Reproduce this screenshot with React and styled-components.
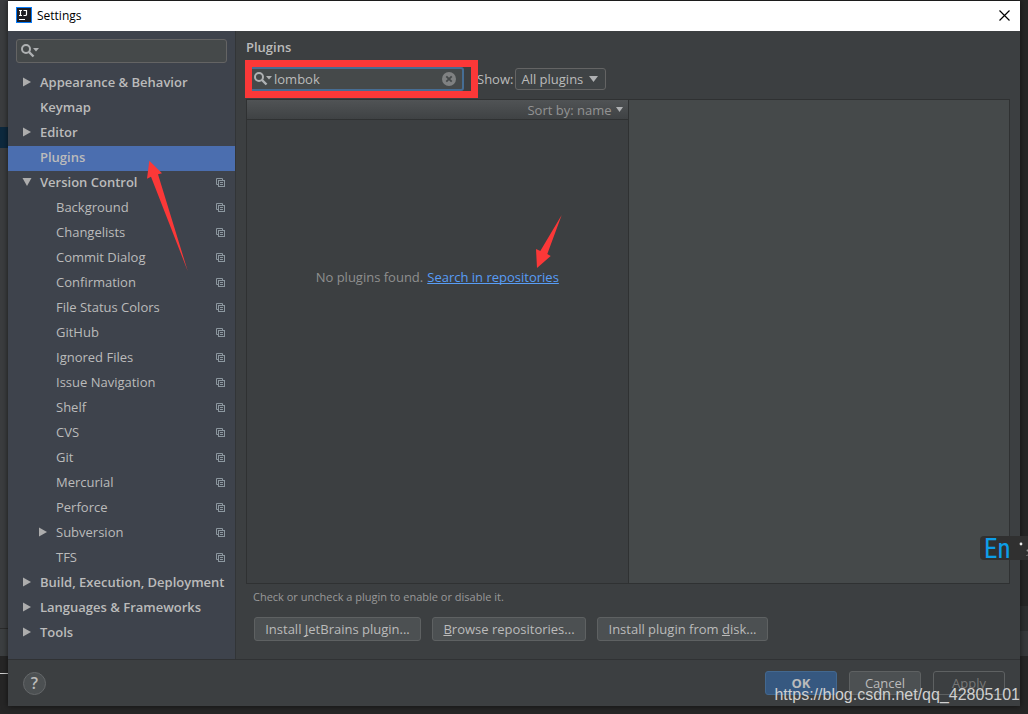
import React, { useState } from 'react';
import styled, { createGlobalStyle } from 'styled-components';

const GlobalStyle = createGlobalStyle`
  * {
    box-sizing: border-box;
  }

  body {
    margin: 0;
    background: #262626;
    color: #bbbbbb;
    font-family: 'Open Sans', 'Noto Sans', 'Noto Sans CJK SC', sans-serif;
    font-size: 13px;
    line-height: 18px;
  }

  button, input, select {
    font: inherit;
    color: inherit;
  }

  svg {
    flex-shrink: 0;
  }

  u, a {
    text-decoration-skip-ink: none;
  }
`;

const treeItems = [
  { label: 'Appearance & Behavior', top: true, arrow: 'right' },
  { label: 'Keymap', top: true },
  { label: 'Editor', top: true, arrow: 'right' },
  { label: 'Plugins', top: true, pointed: true },
  { label: 'Version Control', top: true, arrow: 'down', project: true },
  { label: 'Background', project: true },
  { label: 'Changelists', project: true },
  { label: 'Commit Dialog', project: true },
  { label: 'Confirmation', project: true },
  { label: 'File Status Colors', project: true },
  { label: 'GitHub', project: true },
  { label: 'Ignored Files', project: true },
  { label: 'Issue Navigation', project: true },
  { label: 'Shelf', project: true },
  { label: 'CVS', project: true },
  { label: 'Git', project: true },
  { label: 'Mercurial', project: true },
  { label: 'Perforce', project: true },
  { label: 'Subversion', arrow: 'right', project: true },
  { label: 'TFS', project: true },
  { label: 'Build, Execution, Deployment', top: true, arrow: 'right' },
  { label: 'Languages & Frameworks', top: true, arrow: 'right' },
  { label: 'Tools', top: true, arrow: 'right' },
];

const SearchIcon = () => (
  <svg width="18" height="14" viewBox="0 0 18 14" aria-hidden="true">
    <circle cx="5" cy="5" r="4" fill="none" stroke="#afb1b3" strokeWidth="2" />
    <path d="M8 8L12.5 12.5" stroke="#afb1b3" strokeWidth="2.4" />
    <path d="M12 4H18L15 7.5Z" fill="#afb1b3" />
  </svg>
);

const TreeArrow = ({ direction }) => (
  <svg width="10" height="10" viewBox="0 0 10 10" aria-hidden="true">
    {direction === 'right' && <path d="M1 0.5L9 5L1 9.5Z" fill="#adadad" />}
    {direction === 'down' && <path d="M0.5 1H9.5L5 9Z" fill="#adadad" />}
  </svg>
);

const ProjectIcon = () => (
  <svg width="9" height="9" viewBox="0 0 9 9" fill="none" stroke="#8c979f" aria-hidden="true">
    <path d="M2 6.5H0.5V0.5H6.5V2" />
    <rect x="2.5" y="2.5" width="6" height="6" />
    <path d="M4 4.5H7M4 6.5H7" />
  </svg>
);

const Caret = () => (
  <svg width="9" height="6" viewBox="0 0 9 6" aria-hidden="true">
    <path d="M0 0H9L4.5 6Z" fill="#afb1b3" />
  </svg>
);

const AppLogo = () => (
  <svg width="16" height="16" viewBox="0 0 16 16" aria-hidden="true">
    <rect width="16" height="16" fill="#087cfa" />
    <rect x="1" y="1" width="14" height="14" fill="#1c1c22" />
    <path d="M3 3.5H6M4.5 3.5V8.5M3 8.5H6M7.5 3.5H10.5V7.5Q10.5 8.5 9.4 8.5H7.5" fill="none" stroke="#fff" strokeWidth="1.2" />
    <path d="M3 12.5H9" stroke="#fff" />
  </svg>
);

const App = () => {
  const [selected, setSelected] = useState('Plugins');
  const [treeQuery, setTreeQuery] = useState('');
  const [query, setQuery] = useState('lombok');

  return (
    <Desktop>
      <GlobalStyle />
      <LeftEdge>
        <EdgePart $grow={127} $color="#3b3d3f" />
        <EdgePart $grow={21} $color="#0d293e" />
        <EdgePart $grow={482} $color="#3b3d3f" />
        <EdgePart $grow={27} $color="#3c3f41" $line="#2b2b2b" />
        <EdgePart $grow={17} $color="#262626" />
        <EdgePart $grow={40} $color="#262626" $line="#d0d0d0" />
      </LeftEdge>

      <Dialog>
        <TitleBar>
          <AppLogo />
          <WindowTitle>Settings</WindowTitle>
          <CloseButton aria-label="Close">
            <svg width="11" height="11" viewBox="0 0 11 11">
              <path d="M0.5 0.5L10.5 10.5M10.5 0.5L0.5 10.5" stroke="#000" strokeWidth="1.2" />
            </svg>
          </CloseButton>
        </TitleBar>

        <Body>
          <Sidebar>
            <SearchBox>
              <SearchIcon />
              <TextInput
                aria-label="Search settings"
                value={treeQuery}
                onChange={(e) => setTreeQuery(e.target.value)}
              />
            </SearchBox>
            <Tree>
              {treeItems.map((item) => (
                <TreeItem key={item.label}>
                  <TreeButton
                    $top={item.top}
                    $selected={selected === item.label}
                    onClick={() => setSelected(item.label)}
                  >
                    <TreeArrow direction={item.arrow} />
                    <TreeLabel>{item.label}</TreeLabel>
                    {item.project && <ProjectIcon />}
                  </TreeButton>
                  {item.pointed && (
                    <RowPointer width="42" height="112" viewBox="0 0 42 112" aria-hidden="true">
                      <path d="M2.3 0.7L0 18.7L4 16.7L40.7 111L11 14.3L15 13.3Z" fill="#fb3838" />
                    </RowPointer>
                  )}
                </TreeItem>
              ))}
            </Tree>
          </Sidebar>

          <Main>
            <PageTitle>Plugins</PageTitle>
            <Toolbar>
              <FilterArea>
                <FilterBox>
                  <SearchIcon />
                  <TextInput
                    aria-label="Search plugins"
                    value={query}
                    onChange={(e) => setQuery(e.target.value)}
                  />
                  <ClearButton aria-label="Clear" onClick={() => setQuery('')}>
                    <svg width="14" height="14" viewBox="0 0 14 14">
                      <circle cx="7" cy="7" r="7" fill="#7f8182" />
                      <path d="M4.3 4.3L9.7 9.7M9.7 4.3L4.3 9.7" stroke="#45494a" strokeWidth="1.8" />
                    </svg>
                  </ClearButton>
                </FilterBox>
                <RedFrame />
              </FilterArea>
              <label htmlFor="show">Show:</label>
              <SelectWrapper>
                <Select id="show">
                  <option>All plugins</option>
                  <option>Enabled</option>
                  <option>Disabled</option>
                  <option>Bundled</option>
                  <option>Custom</option>
                </Select>
                <SelectCaret>
                  <Caret />
                </SelectCaret>
              </SelectWrapper>
            </Toolbar>

            <Panels>
              <ListPanel>
                <ListHeader>
                  <SortButton>
                    Sort by: name
                    <svg width="7" height="5" viewBox="0 0 7 5" aria-hidden="true">
                      <path d="M0 0H7L3.5 5Z" fill="#afb1b3" />
                    </svg>
                  </SortButton>
                </ListHeader>
                <EmptyState>
                  <span>No plugins found.</span>
                  <LinkHolder>
                    <RepoLink href="#repositories">Search in repositories</RepoLink>
                    <LinkPointer width="27" height="54" viewBox="0 0 27 54" aria-hidden="true">
                      <path d="M1 53L0 34L4.3 36L25.7 0L11.3 39L14.7 41Z" fill="#fb3838" />
                    </LinkPointer>
                  </LinkHolder>
                </EmptyState>
              </ListPanel>
              <DetailPanel />
            </Panels>

            <Hint>Check or uncheck a plugin to enable or disable it.</Hint>
            <Actions>
              <Button $width={167}>Install <u>J</u>etBrains plugin...</Button>
              <Button $width={154}><u>B</u>rowse repositories...</Button>
              <Button $width={171}>Install plugin from <u>d</u>isk...</Button>
            </Actions>
          </Main>
        </Body>

        <Footer>
          <HelpButton aria-label="Help">?</HelpButton>
          <FooterButtons>
            <Button $width={72} $primary>OK</Button>
            <Button $width={72}>Cancel</Button>
            <Button $width={72} disabled>Apply</Button>
          </FooterButtons>
        </Footer>
      </Dialog>

      <RightEdge>
        <EdgePart $grow={606} $color="#262626" />
        <EdgePart $grow={25} $color="#2d2f30" />
        <EdgePart $grow={25} $color="#37393b" />
        <EdgePart $grow={58} $color="#262626" />
      </RightEdge>

      <InputBadge>
        En
        <svg width="16" height="24" viewBox="0 0 16 24" aria-hidden="true">
          <circle cx="9" cy="8" r="1.4" fill="#e8e8e8" />
          <circle cx="15.5" cy="14.5" r="1" fill="#999" />
          <path d="M14.5 20L16 18.5" stroke="#999" />
        </svg>
      </InputBadge>
      <Watermark>https://blog.csdn.net/qq_42805101</Watermark>
    </Desktop>
  );
};

const Desktop = styled.div`
  position: relative;
  display: flex;
  min-height: 100vh;
  overflow: hidden;
`;

const LeftEdge = styled.div`
  display: flex;
  flex-direction: column;
  width: 8px;
`;

const RightEdge = styled(LeftEdge)``;

const EdgePart = styled.div`
  flex: ${props => props.$grow} 0 0;
  background: ${props => props.$color};
  border-top: ${props => props.$line ? `1px solid ${props.$line}` : 'none'};
`;

const Dialog = styled.div`
  flex: 1;
  min-width: 0;
  display: flex;
  flex-direction: column;
  margin: 1px 0 8px;
  background: #3c3f41;
  box-shadow: 0 0 6px rgba(0, 0, 0, 0.6);
  z-index: 1;
`;

const TitleBar = styled.header`
  display: flex;
  align-items: center;
  height: 30px;
  padding: 0 10px 2px 8px;
  background: #ffffff;
  color: #000000;
`;

const WindowTitle = styled.h1`
  flex: 1;
  margin: 0 0 0 5px;
  padding-top: 2px;
  font-size: 12px;
  font-weight: normal;
`;

const CloseButton = styled.button`
  display: flex;
  padding: 0;
  border: none;
  background: none;
`;

const Body = styled.div`
  flex: 1;
  display: flex;
  border-bottom: 1px solid #303234;
`;

const Sidebar = styled.nav`
  width: 228px;
  flex-shrink: 0;
  padding: 8px 0 12px;
  background: #3e434c;
  border-right: 1px solid #323537;
`;

const SearchBox = styled.div`
  display: flex;
  align-items: center;
  height: 24px;
  margin: 0 8px 8px;
  padding: 0 4px;
  background: #45494a;
  border: 1px solid #646464;
  border-radius: 3px;
`;

const TextInput = styled.input`
  flex: 1;
  min-width: 0;
  padding: 0 0 0 2px;
  border: none;
  outline: none;
  background: none;
`;

const Tree = styled.ul`
  margin: 0;
  padding: 0;
  list-style: none;
`;

const TreeItem = styled.li`
  position: relative;
`;

const TreeButton = styled.button`
  display: flex;
  align-items: center;
  gap: 8px;
  width: 100%;
  height: 25px;
  padding: 0 10px 3px ${props => props.$top ? 14 : 30}px;
  border: none;
  background: ${props => props.$selected ? '#4b6eaf' : 'transparent'};
  font-weight: ${props => props.$top ? 600 : 400};
  text-align: left;
  white-space: nowrap;
`;

const TreeLabel = styled.span`
  flex: 1;
  min-width: 0;
`;

const RowPointer = styled.svg`
  position: absolute;
  top: 14px;
  left: 139px;
  z-index: 1;
  pointer-events: none;
`;

const Main = styled.main`
  flex: 1;
  min-width: 0;
  display: flex;
  flex-direction: column;
  padding: 7px 10px 18px;
`;

const PageTitle = styled.h2`
  margin: 0 0 11px;
  font-size: 13px;
  font-weight: 600;
  line-height: 18px;
`;

const Toolbar = styled.div`
  display: flex;
  align-items: center;
  margin-bottom: 8px;
`;

const FilterArea = styled.div`
  position: relative;
  width: 231px;
`;

const FilterBox = styled(SearchBox)`
  width: 218px;
  margin: 0;
  padding: 0 6px;
  border: 2px solid #466d94;
`;

const ClearButton = styled(CloseButton)``;

const RedFrame = styled.div`
  position: absolute;
  inset: -7px -1px;
  border: 7px solid #fb3838;
  pointer-events: none;
`;

const SelectWrapper = styled.div`
  position: relative;
  margin-left: 2px;
`;

const Select = styled.select`
  appearance: none;
  display: block;
  width: 91px;
  height: 22px;
  padding: 0 5px;
  background: #3f4345;
  border: 1px solid #646464;
  border-radius: 3px;
`;

const SelectCaret = styled.span`
  position: absolute;
  top: 8px;
  right: 8px;
  display: flex;
  pointer-events: none;
`;

const Panels = styled.div`
  flex: 1;
  display: flex;
  border: 1px solid #2f3132;
`;

const ListPanel = styled.section`
  flex: 1 1 0;
  display: flex;
  flex-direction: column;
  border-right: 1px solid #2f3132;
`;

const DetailPanel = styled.section`
  flex: 1 1 0;
  background: #45494a;
`;

const ListHeader = styled.div`
  display: flex;
  justify-content: flex-end;
  align-items: center;
  height: 20px;
  padding-right: 5px;
  background: linear-gradient(#505355, #3f4244);
  border-bottom: 1px solid #2f3132;
`;

const SortButton = styled.button`
  display: flex;
  align-items: center;
  gap: 4px;
  padding: 0;
  border: none;
  background: none;
  color: #939393;
`;

const EmptyState = styled.div`
  display: flex;
  justify-content: center;
  gap: 4px;
  padding-top: 148px;
  color: #8f8f8f;
`;

const LinkHolder = styled.span`
  position: relative;
`;

const RepoLink = styled.a`
  color: #589df6;
`;

const LinkPointer = styled.svg`
  position: absolute;
  top: -53px;
  left: 109px;
  pointer-events: none;
`;

const Hint = styled.p`
  margin: 4px 7px 11px;
  font-size: 11px;
  color: #999999;
`;

const Actions = styled.div`
  display: flex;
  gap: 11px;
  padding-left: 8px;
`;

const Button = styled.button`
  width: ${props => props.$width}px;
  height: 24px;
  padding: 0;
  border: 1px solid ${props => props.$primary ? '#43688f' : '#5e6162'};
  border-radius: 3px;
  background: ${props => props.$primary ? '#365880' : '#4c5052'};
  font-weight: ${props => props.$primary ? 'bold' : 'normal'};
  white-space: nowrap;

  &:disabled {
    background: transparent;
    color: #777777;
  }
`;

const Footer = styled.footer`
  display: flex;
  justify-content: space-between;
  align-items: center;
  height: 46px;
  padding: 0 15px;
`;

const HelpButton = styled.button`
  width: 23px;
  height: 23px;
  padding: 0;
  border: 1px solid #646769;
  border-radius: 50%;
  background: #4c5052;
  font-size: 16px;
  font-weight: 600;
`;

const FooterButtons = styled.div`
  display: flex;
  gap: 12px;
`;

const InputBadge = styled.div`
  position: absolute;
  right: 0;
  bottom: 154px;
  z-index: 2;
  display: flex;
  justify-content: space-between;
  width: 48px;
  height: 24px;
  padding-left: 4px;
  border-radius: 4px 0 0 4px;
  background: #303030;
  color: #0d9ee8;
  font-family: 'Liberation Sans Narrow', 'Roboto Condensed', 'Open Sans Condensed', 'Liberation Sans', sans-serif;
  font-size: 27px;
  line-height: 26px;
`;

const Watermark = styled.div`
  position: absolute;
  right: 8px;
  bottom: 10px;
  z-index: 2;
  color: #d0d0d0;
  font-family: 'Liberation Sans', Arial, sans-serif;
  font-size: 16px;
  pointer-events: none;
`;

export default App;
